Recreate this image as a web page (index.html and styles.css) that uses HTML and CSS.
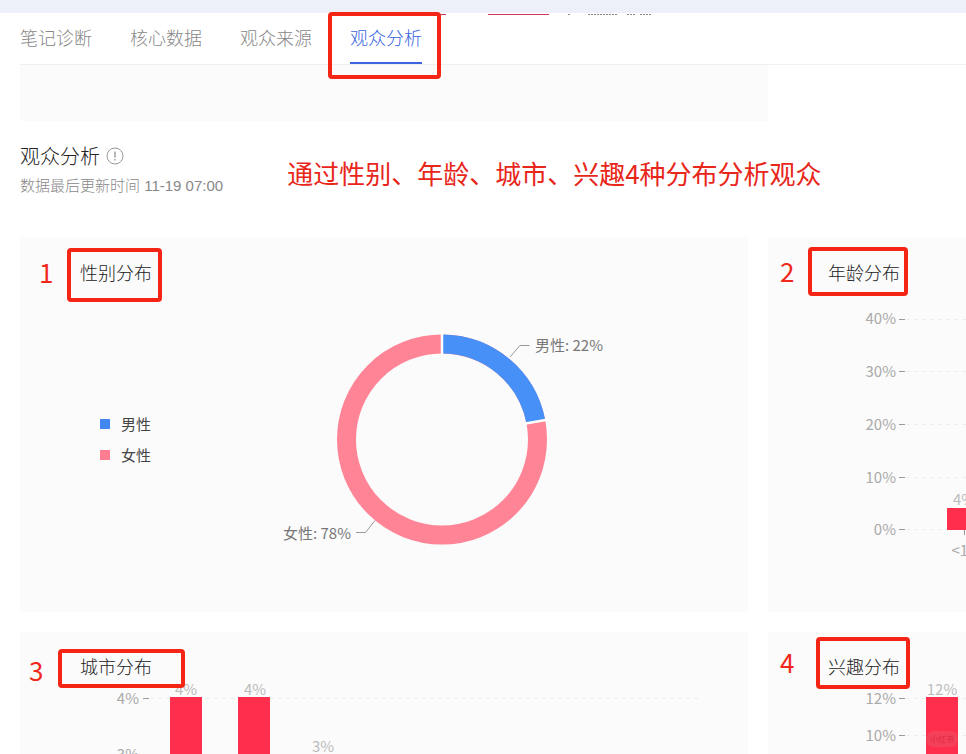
FILE: index.html
```
<!DOCTYPE html>
<html lang="zh-CN">
<head>
    <meta charset="UTF-8">
    <meta name="viewport" content="width=device-width, initial-scale=1.0">
    <title>观众分析</title>

    <link rel="stylesheet" href="styles.css">
</head>
<body>
    <header class="top-bar"></header>

    <nav class="tabs">
        <!-- Scrolled content showing above the tabs -->
        <svg class="tabs-peek" width="230" height="2" viewBox="0 0 230 2" aria-hidden="true">
            <path d="M0 1.500H16M58 1.500H119" stroke="#c8385a"/>
            <path d="M138 1.500h3M158 1.500h30M197 1.500h8M210 1.500h11" stroke="#888" stroke-dasharray="2 1"/>
        </svg>
        <a href="#diagnosis">笔记诊断</a>
        <a href="#core">核心数据</a>
        <a href="#source">观众来源</a>
        <a href="#audience" class="active">观众分析</a>
        <span class="mark mark-tab"></span>
    </nav>

    <main class="content">
        <div class="previous-card"></div>

        <section class="section-header" id="audience">
            <div>
                <h1>
                    观众分析
                    <svg width="18" height="18" viewBox="0 0 18 18" fill="none" stroke="#999" aria-hidden="true">
                        <circle cx="9" cy="9" r="8"/>
                        <path d="M9 4.500v6M9 12v1.500" stroke-width="1.400"/>
                    </svg>
                </h1>
                <p class="update-time">数据最后更新时间 11-19 07:00</p>
            </div>
            <p class="note">通过性别、年龄、城市、兴趣4种分布分析观众</p>
        </section>

        <div class="cards">
            <section class="card">
                <h2>性别分布</h2>
                <span class="number number-gender">1</span>
                <span class="mark mark-gender"></span>
                <div class="gender-body">
                    <ul class="legend">
                        <li><i class="male"></i>男性</li>
                        <li><i class="female"></i>女性</li>
                    </ul>
                    <svg class="chart" width="340" height="220" viewBox="0 0 340 220">
                        <g fill="none" stroke-width="19" transform="rotate(-90 171 110.500)">
                            <circle cx="171" cy="110.500" r="95.500" stroke="#ff8496"/>
                            <circle cx="171" cy="110.500" r="95.500" stroke="#4690f7" pathLength="100" stroke-dasharray="22 78"/>
                        </g>
                        <!-- Gaps between the slices -->
                        <path d="M171 25.500V4M254.500 94.500L277.500 90.500" stroke="#fff" stroke-width="2.500"/>
                        <path class="leader" d="M239 28L249 16.500H258.500M104 191.500L94.500 203.500H85"/>
                        <text class="slice-label" x="264" y="22">男性: 22%</text>
                        <text class="slice-label" x="12" y="210">女性: 78%</text>
                    </svg>
                </div>
            </section>

            <section class="card">
                <h2>年龄分布</h2>
                <span class="number number-age">2</span>
                <span class="mark mark-age"></span>
                <svg class="chart" width="608" height="300" viewBox="0 0 608 300">
                    <path class="grid-line" d="M78 33.500H608M78 85.500H608M78 138.500H608M78 191.500H608M78 243.500H608"/>
                    <path class="tick" d="M71 33.500H77M71 85.500H77M71 138.500H77M71 191.500H77M71 243.500H77"/>
                    <g class="axis-y">
                        <text x="68" y="38">40%</text>
                        <text x="68" y="91">30%</text>
                        <text x="68" y="144">20%</text>
                        <text x="68" y="197">10%</text>
                        <text x="68" y="249">0%</text>
                    </g>
                    <rect class="bar" x="119" y="222" width="34" height="22"/>
                    <path class="tick" d="M136.500 244V249"/>
                    <text class="bar-label" x="136" y="219">4%</text>
                    <text class="axis-x" x="136" y="270">&lt;18</text>
                </svg>
            </section>

            <section class="card">
                <h2>城市分布</h2>
                <span class="number number-city">3</span>
                <svg class="chart" width="608" height="300" viewBox="0 0 608 300">
                    <path class="grid-line" d="M70 18.500H622M70 75.500H622"/>
                    <path class="tick" d="M63 18.500H69M63 75.500H69"/>
                    <g class="axis-y">
                        <text x="59" y="24">4%</text>
                        <text x="59" y="80">3%</text>
                    </g>
                    <rect class="bar" x="90" y="17" width="32" height="227"/>
                    <rect class="bar" x="158" y="17" width="32" height="227"/>
                    <rect class="bar" x="227" y="74" width="32" height="170"/>
                    <text class="bar-label" x="106" y="15">4%</text>
                    <text class="bar-label" x="175" y="15">4%</text>
                    <text class="bar-label" x="243" y="72">3%</text>
                </svg>
                <span class="mark mark-city"></span>
            </section>

            <section class="card">
                <h2>兴趣分布</h2>
                <span class="number number-interest">4</span>
                <svg class="chart" width="608" height="300" viewBox="0 0 608 300">
                    <path class="grid-line" d="M78 18.500H608M78 55.500H608"/>
                    <path class="tick" d="M71 18.500H77M71 55.500H77"/>
                    <g class="axis-y">
                        <text x="68" y="24">12%</text>
                        <text x="68" y="61">10%</text>
                    </g>
                    <rect class="bar" x="98" y="17" width="32" height="227"/>
                    <text class="bar-label" x="114" y="15">12%</text>
                    <rect class="badge" x="98" y="51" width="32" height="16" rx="8"/>
                    <text class="badge-text" x="114" y="62">小红书</text>
                </svg>
                <span class="mark mark-interest"></span>
            </section>
        </div>
    </main>
</body>
</html>
```
FILE: styles.css
```
* {
    box-sizing: border-box;
}

body {
    margin: 0;
    height: 100vh;
    overflow: hidden;
    background-color: #fff;
    color: #222;
    font-family: "Noto Sans CJK SC", sans-serif;
}

h1,
h2,
p,
ul {
    margin: 0;
    padding: 0;
}

.top-bar {
    height: 13px;
    background-color: #edf0f9;
}

/* Tabs */
.tabs {
    position: relative;
    display: flex;
    gap: 38px;
    height: 52px;
    margin-left: 20px;
    border-bottom: 1px solid #f0f0f0;
}

.tabs a {
    height: 51px;
    border-bottom: 2px solid transparent;
    color: #888;
    font-size: 18px;
    font-weight: 300;
    line-height: 48px;
    text-decoration: none;
}

.tabs .active {
    border-color: #3a64e0;
    color: #3a64e0;
}

.tabs-peek {
    position: absolute;
    top: 0;
    left: 410px;
}

/* Section heading */
.content {
    padding-left: 20px;
}

.previous-card {
    width: 748px;
    height: 56px;
    background-color: #fbfbfb;
}

.section-header {
    display: flex;
    align-items: center;
    gap: 64px;
    padding: 19px 0 38px;
}

.section-header h1 {
    display: flex;
    align-items: center;
    gap: 6px;
    font-size: 20px;
    font-weight: 300;
    line-height: 32px;
}

.update-time {
    color: #888;
    font-family: "Liberation Sans", "Noto Sans CJK SC", sans-serif;
    font-size: 15px;
    font-weight: 300;
    line-height: 28px;
}

.note {
    padding-top: 6px;
    color: #e8261a;
    font-size: 26px;
    line-height: 38px;
    white-space: nowrap;
}

/* Cards */
.cards {
    display: grid;
    grid-template-columns: repeat(2, minmax(728px, 1fr));
    gap: 20px;
}

.card {
    position: relative;
    display: flex;
    flex-direction: column;
    min-height: 374px;
    padding: 20px 60px;
    background-color: #fbfbfb;
}

.card h2 {
    font-size: 18px;
    font-weight: 300;
    line-height: 28px;
}

.gender-body {
    display: flex;
    flex: 1;
    align-items: center;
    gap: 120px;
    padding-left: 20px;
}

.legend {
    color: #444;
    font-size: 15px;
    line-height: 31px;
    list-style: none;
}

.legend li {
    display: flex;
    align-items: center;
    gap: 11px;
}

.legend i {
    width: 10px;
    height: 10px;
}

.male {
    background-color: #4088f0;
}

.female {
    background-color: #ff7d90;
}

/* Charts */
.chart {
    flex-shrink: 0;
    overflow: visible;
    font-size: 15px;
}

.slice-label {
    fill: #777;
}

.leader {
    fill: none;
    stroke: #999;
}

.axis-y {
    fill: #aaa;
    text-anchor: end;
}

.axis-x {
    fill: #aaa;
    text-anchor: middle;
}

.bar-label {
    fill: #bbb;
    text-anchor: middle;
}

.bar {
    fill: #ff2e4d;
}

.tick {
    stroke: #999;
}

.grid-line {
    stroke: #eee;
    stroke-dasharray: 4 4;
}

.badge {
    fill: #f5405a;
}

.badge-text {
    fill: #d92b45;
    font-size: 8px;
    text-anchor: middle;
}

/* Red annotations drawn over the page */
.mark {
    position: absolute;
    border: 4px solid #f52516;
    border-radius: 4px;
}

.number {
    position: absolute;
    color: #f0281c;
    font-size: 26px;
    line-height: 28px;
}

.mark-tab {
    top: -1px;
    left: 308px;
    width: 113px;
    height: 67px;
}

.mark-gender {
    top: 10px;
    left: 47px;
    width: 95px;
    height: 54px;
}

.mark-age {
    top: 9px;
    left: 40px;
    width: 100px;
    height: 49px;
}

.mark-city {
    top: 17px;
    left: 38px;
    width: 127px;
    height: 39px;
}

.mark-interest {
    top: 5px;
    left: 48px;
    width: 94px;
    height: 52px;
}

.number-gender {
    top: 20px;
    left: 19px;
}

.number-age {
    top: 19px;
    left: 12px;
}

.number-city {
    top: 24px;
    left: 9px;
}

.number-interest {
    top: 16px;
    left: 12px;
}
```
